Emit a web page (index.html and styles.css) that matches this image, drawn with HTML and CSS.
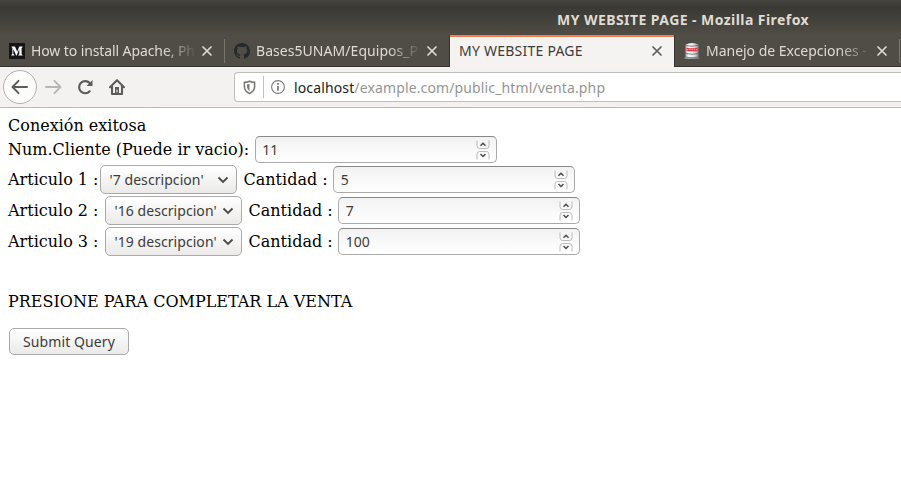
FILE: index.html
```html
<!DOCTYPE html>
<html lang="es">
<head>
<meta charset="utf-8">
<title>MY WEBSITE PAGE</title>
<link rel="stylesheet" href="styles.css">
</head>
<body>
<svg class="defs" width="0" height="0">
  <symbol id="close" viewBox="0 0 12 12"><path d="M2 2l8 8M10 2l-8 8" fill="none" stroke="currentColor" stroke-width="1.7" stroke-linecap="round"/></symbol>
  <symbol id="spin" viewBox="0 0 14 20"><path d="M1 0.5V5.500Q1 8.500 3.500 8.500H10.500Q13 8.500 13 5.500V0.500M1 19.500V14.500Q1 11.500 3.500 11.500H10.500Q13 11.500 13 14.500V19.500" fill="none" stroke="#bbb"/><path d="M4.500 5.800L7 3.300L9.500 5.800M4.500 14L7 16.500L9.500 14" fill="none" stroke="#4c4c4c" stroke-width="1.5"/></symbol>
  <symbol id="chev" viewBox="0 0 12 8"><path d="M1.500 1.500L6 6L10.500 1.500" fill="none" stroke="#4c4c4c" stroke-width="1.900"/></symbol>
</svg>
<header class="chrome">
  <div class="titlebar"><span>MY WEBSITE PAGE - Mozilla Firefox</span></div>
  <nav class="tabs">
    <div class="tab">
      <svg class="favicon" viewBox="0 0 16 16"><rect width="16" height="16" fill="#151515"/><path d="M2.500 3.500H6L8.200 8.800L10.300 3.500H13.500V4.300L12.600 5V11.200L13.600 12V12.500H9.300V12L10.300 11.200V6L7.600 12.500H7.200L4.300 6V10.700L5.400 12V12.500H2.300V12L3.400 10.700V5L2.500 4.100Z" fill="#fff"/></svg>
      <span class="label t1">How to install Apache, Ph</span>
      <svg class="close"><use href="#close"/></svg>
    </div>
    <div class="tab divided">
      <svg class="favicon" viewBox="0 0 16 16"><path fill="#24292e" d="M8 0C3.580 0 0 3.580 0 8c0 3.540 2.290 6.530 5.470 7.590.4.070.55-.17.55-.38 0-.19-.01-.82-.01-1.490-2.010.37-2.530-.49-2.690-.94-.09-.23-.48-.94-.82-1.130-.28-.15-.68-.52-.01-.53.63-.01 1.080.58 1.230.82.72 1.210 1.870.87 2.330.66.07-.52.28-.87.51-1.070-1.780-.2-3.640-.89-3.640-3.950 0-.87.31-1.590.82-2.150-.08-.2-.36-1.020.08-2.120 0 0 .67-.21 2.200.82a7.600 7.600 0 0 1 4 0c1.530-1.040 2.200-.82 2.200-.82.44 1.100.16 1.920.08 2.120.51.56.82 1.270.82 2.150 0 3.070-1.870 3.750-3.650 3.950.29.25.54.73.54 1.480 0 1.070-.01 1.930-.01 2.200 0 .21.15.46.55.38A8 8 0 0 0 16 8c0-4.420-3.580-8-8-8Z"/></svg>
      <span class="label t2">Bases5UNAM/Equipos_P</span>
      <svg class="close"><use href="#close"/></svg>
    </div>
    <div class="tab active">
      <span class="label t3">MY WEBSITE PAGE</span>
      <svg class="close"><use href="#close"/></svg>
    </div>
    <div class="tab">
      <svg class="favicon" viewBox="0 0 16 16"><defs><linearGradient id="can"><stop stop-color="#888"/><stop offset=".3" stop-color="#fff"/><stop offset=".65" stop-color="#ddd"/><stop offset="1" stop-color="#666"/></linearGradient></defs><path d="M1.500 1.500Q8-1.500 14.500 1.500V13.500L16 15.500H0L1.500 13.500Z" fill="url(#can)"/><path d="M2 2.500Q8 4 14 2.500M1.500 10.500Q8 12 14.500 10.500M1 14Q8 15.500 15 14" stroke="#666" stroke-width=".8" fill="none"/><path d="M2.500 4.700Q8 5.700 13.500 4.700V7.700Q8 8.700 2.500 7.700Z" fill="#e8303a"/><path d="M3 6.500H13" stroke="#ff9b9b" stroke-dasharray="1.500 .7"/></svg>
      <span class="label t4">Manejo de Excepciones -</span>
      <svg class="close"><use href="#close"/></svg>
    </div>
    <div class="tab divided rest"></div>
  </nav>
  <div class="toolbar">
    <svg class="tools" viewBox="0 0 140 40" fill="none" stroke-linecap="round" stroke-linejoin="round">
      <circle cx="20" cy="20" r="16.500" fill="#fcfcfb" stroke="#b3b1ae"/>
      <path d="M27 20H13M18.500 13.900L12.500 20L18.500 26.100" stroke="#5c5c5b" stroke-width="2"/>
      <path d="M46 20H60M54.500 13.900L60.500 20L54.500 26.100" stroke="#b8b7b5" stroke-width="2"/>
      <path d="M89.700 24.300A6.100 6.100 0 1 1 89.700 16" stroke="#5c5c5b" stroke-width="2.200"/>
      <path d="M92.500 13V19H86.500Z" fill="#5c5c5b"/>
      <path d="M110 20.200L117 13.200L124 20.200M112 19V27H122V19" stroke="#5c5c5b" stroke-width="2.100"/>
      <path d="M115 20H119V27H115Z" fill="#5c5c5b"/><path d="M117 23V25" stroke="#fff" stroke-width="1"/>
    </svg>
    <div class="urlbar">
      <svg class="shield" viewBox="0 0 14 16"><path d="M1.500 2.500Q4.500 2.500 7 1.200Q9.500 2.500 12.500 2.500V7Q12.500 12 7 14.500Q1.500 12 1.500 7Z" fill="none" stroke="#7c7c7b" stroke-width="1.700"/><path d="M7 4V12Q4.200 10.300 4.200 7V4.800Q5.800 4.700 7 4Z" fill="#7c7c7b"/></svg>
      <i class="sep"></i>
      <svg class="info" viewBox="0 0 14 14"><circle cx="7" cy="7" r="6.400" fill="none" stroke="#7c7c7b" stroke-width="1.100"/><path d="M7 6V10.800M7 3V4.700" stroke="#7c7c7b" stroke-width="1.800"/></svg>
      <span class="url"><b>localhost</b>/example.com/public_html/venta.php</span>
    </div>
  </div>
</header>
<main>
  <p>Conexión exitosa</p>
  <form>
    <div class="row client"><span>Num.Cliente (Puede ir vacio):</span><span class="number">11<svg><use href="#spin"/></svg></span></div>
    <div class="row first"><span>Articulo 1 :</span><span class="select">'7 descripcion'<svg><use href="#chev"/></svg></span><span>Cantidad :</span><span class="number">5<svg><use href="#spin"/></svg></span></div>
    <div class="row"><span>Articulo 2 :</span><span class="select">'16 descripcion'<svg><use href="#chev"/></svg></span><span>Cantidad :</span><span class="number">7<svg><use href="#spin"/></svg></span></div>
    <div class="row"><span>Articulo 3 :</span><span class="select">'19 descripcion'<svg><use href="#chev"/></svg></span><span>Cantidad :</span><span class="number">100<svg><use href="#spin"/></svg></span></div>
    <p class="prompt">PRESIONE PARA COMPLETAR LA VENTA</p>
    <button class="submit" type="button">Submit Query</button>
  </form>
</main>
</body>
</html>
```
FILE: styles.css
```css
* { box-sizing: border-box; }
body { margin: 0; height: 494px; overflow: hidden; background: #fff; color: #000; font: 16px/19px "DejaVu Serif", serif; }
svg { display: block; flex: none; }
p { margin: 0; }
.defs { position: absolute; }
.chrome { height: 108px; font: 14px/20px "Noto Sans", sans-serif; }
.titlebar { height: 35px; padding: 10px 0 0 557px; background: linear-gradient(#46453f 0, #3a3934 7px, #3d3c37 12px, #4a4841 29px, #504d46 35px); color: #dfdbd2; font-weight: 700; letter-spacing: .44px; white-space: nowrap; }
.tabs { display: flex; height: 32px; background: #504d46; }
.tab { position: relative; display: flex; flex: none; width: 225px; align-items: center; padding: 0 12px 0 9px; color: #dfdbd2; border-bottom: 1px solid #34332f; }
.divided::before { content: ""; position: absolute; left: -1px; top: 4px; width: 1px; height: 24px; background: #77746d; }
.favicon { width: 16px; height: 16px; margin-right: 6px; }
.label { flex: 1; min-width: 0; white-space: nowrap; mask-image: linear-gradient(90deg, #000 calc(100% - 34px), transparent); }
.t1 { letter-spacing: -.1px; }
.t2 { letter-spacing: .05px; }
.t3 { letter-spacing: .24px; }
.t4 { letter-spacing: -.02px; }
.close { width: 12px; height: 12px; margin-left: 4px; }
.active { width: 226px; margin-left: -1px; padding-left: 10px; background: #f4f3f2; color: #3c3c3c; border: 0; box-shadow: inset 1px 0 #34332f, inset -1px 0 #34332f, inset 0 2px #ef7f4c; }
.active .close { color: #5c5c5b; }
.active .label { mask-image: none; }
.rest { flex: 1; padding: 0; }
.toolbar { display: flex; align-items: center; height: 41px; border-bottom: 1px solid #bcbab8; background: #f3f2f1; }
.tools { width: 140px; height: 40px; }
.urlbar { display: flex; flex: 1; align-items: center; height: 30px; margin: 0 0 0 94px; padding-left: 8px; border: 1px solid #c0bebc; border-right: 0; border-radius: 4px 0 0 4px; background: #fff; }
.shield { width: 13px; height: 15px; }
.sep { width: 1px; height: 22px; margin: 0 7px 0 7px; background: #c0c0c0; }
.info { width: 14px; height: 14px; }
.url { margin-left: 9px; padding-top: 2px; color: #959595; letter-spacing: .13px; white-space: nowrap; }
.url b { color: #222; font-weight: 400; }
main { padding: 8px 8px 0; }
.row { display: flex; align-items: center; height: 31px; white-space: nowrap; }
.client { height: 29px; }
.number, .select, .submit { font: 14px/20px "Noto Sans", sans-serif; color: #3c3c3c; border: 1px solid #aaa; border-radius: 5px; }
.number { display: flex; align-items: center; justify-content: space-between; width: 242px; height: 27px; padding: 0 6px 0 7px; margin-left: 5px; border-top-color: #888; background: linear-gradient(#f2f2f2, #fff); }
.client .number { margin-left: 6px; padding-left: 6px; }
.number svg { width: 14px; height: 20px; }
.select { display: flex; align-items: center; justify-content: space-between; width: 137px; height: 29px; margin: 0 7px 0 6px; padding: 0 7px 0 9px; background: linear-gradient(#fff, #ebeae9); letter-spacing: .06px; }
.first .select { margin-left: 1px; }
.select svg { width: 12px; height: 8px; }
.prompt { margin-top: 35px; }
.submit { display: block; width: 120px; height: 27px; margin: 17px 0 0 1px; padding: 0; background: linear-gradient(#fff, #ebeae9); letter-spacing: .1px; }
```
